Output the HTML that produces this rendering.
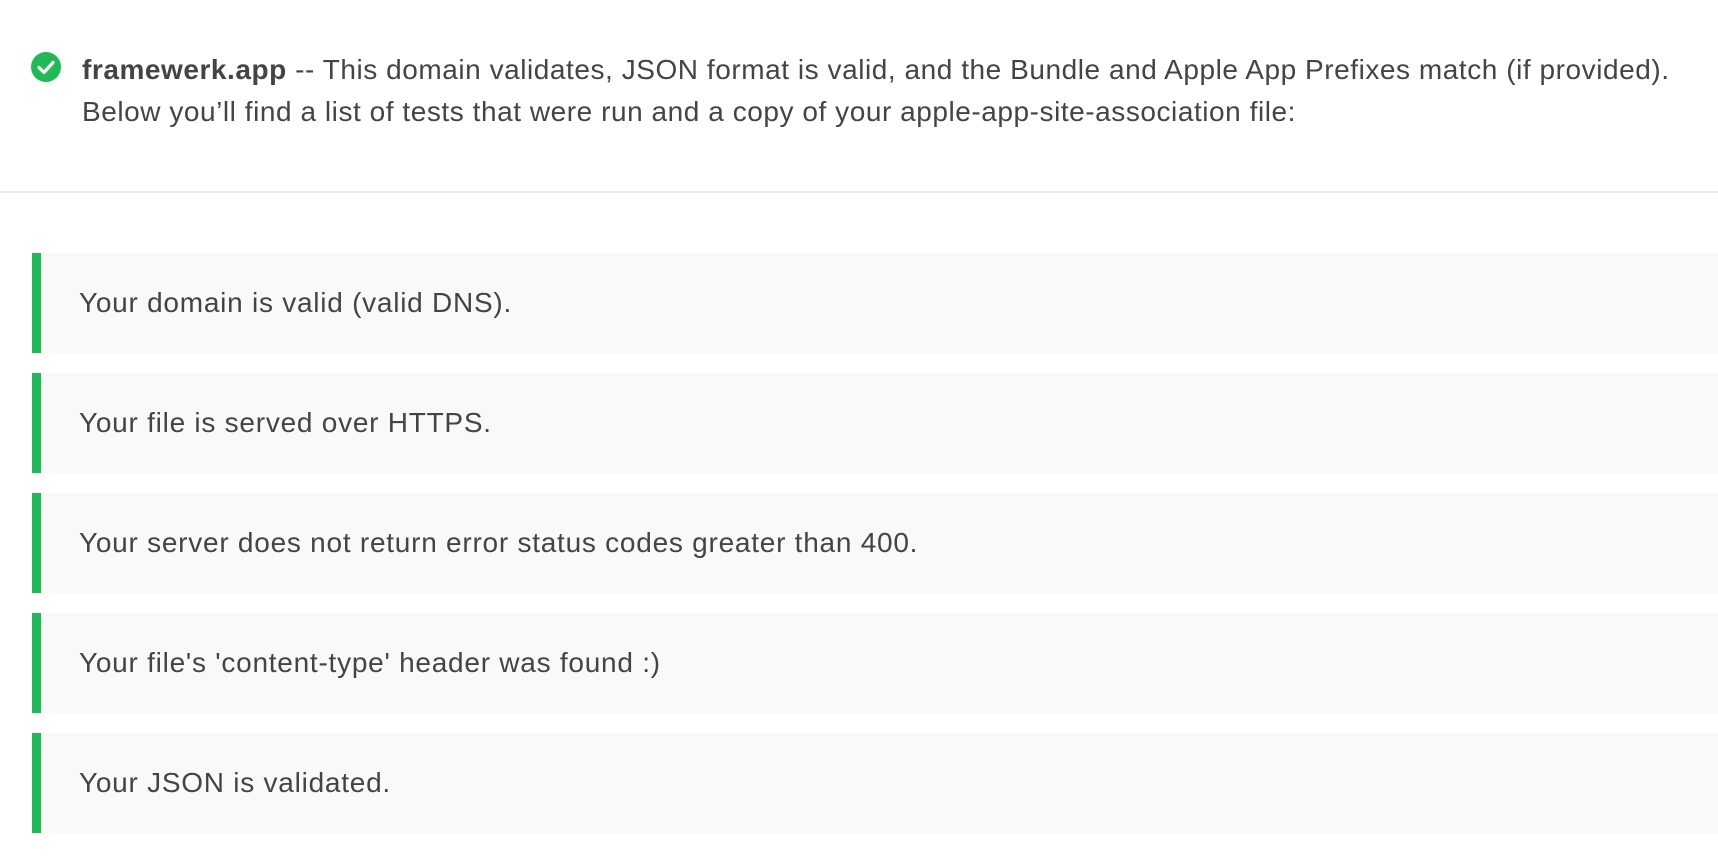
<!DOCTYPE html>
<html><head><meta charset="utf-8"><style>
body{margin:0;background:#fff;width:1718px;height:860px;overflow:hidden;font-family:"Liberation Sans",sans-serif;color:#444;}
.hdr{position:absolute;left:0;top:0;width:1718px;height:191px;border-bottom:2px solid #ececec;}
.icon{position:absolute;left:31px;top:52px;}
.t{position:absolute;left:82px;font-size:28px;white-space:nowrap;letter-spacing:0.55px;}
.row{position:absolute;left:32px;width:1686px;height:100px;background:#f9f9f9;border-left:9px solid #21b856;box-sizing:border-box;}
.row span{position:absolute;left:38px;top:34px;font-size:28px;letter-spacing:0.75px;}
</style></head><body>
<div class="hdr">
<svg class="icon" width="30" height="30" viewBox="0 0 30 30"><circle cx="15" cy="15" r="15" fill="#21b856"/><path d="M8 15.5l5 5 9-10" stroke="#fff" stroke-width="3.2" fill="none" stroke-linecap="round" stroke-linejoin="round"/></svg>
<div class="t" style="top:54px"><b>framewerk.app</b> -- This domain validates, JSON format is valid, and the Bundle and Apple App Prefixes match (if provided).</div>
<div class="t" style="top:96px">Below you’ll find a list of tests that were run and a copy of your apple-app-site-association file:</div>
</div>
<div class="row" style="top:253px"><span>Your domain is valid (valid DNS).</span></div>
<div class="row" style="top:373px"><span>Your file is served over HTTPS.</span></div>
<div class="row" style="top:493px"><span>Your server does not return error status codes greater than 400.</span></div>
<div class="row" style="top:613px"><span>Your file's 'content-type' header was found :)</span></div>
<div class="row" style="top:733px"><span>Your JSON is validated.</span></div>
</body></html>
